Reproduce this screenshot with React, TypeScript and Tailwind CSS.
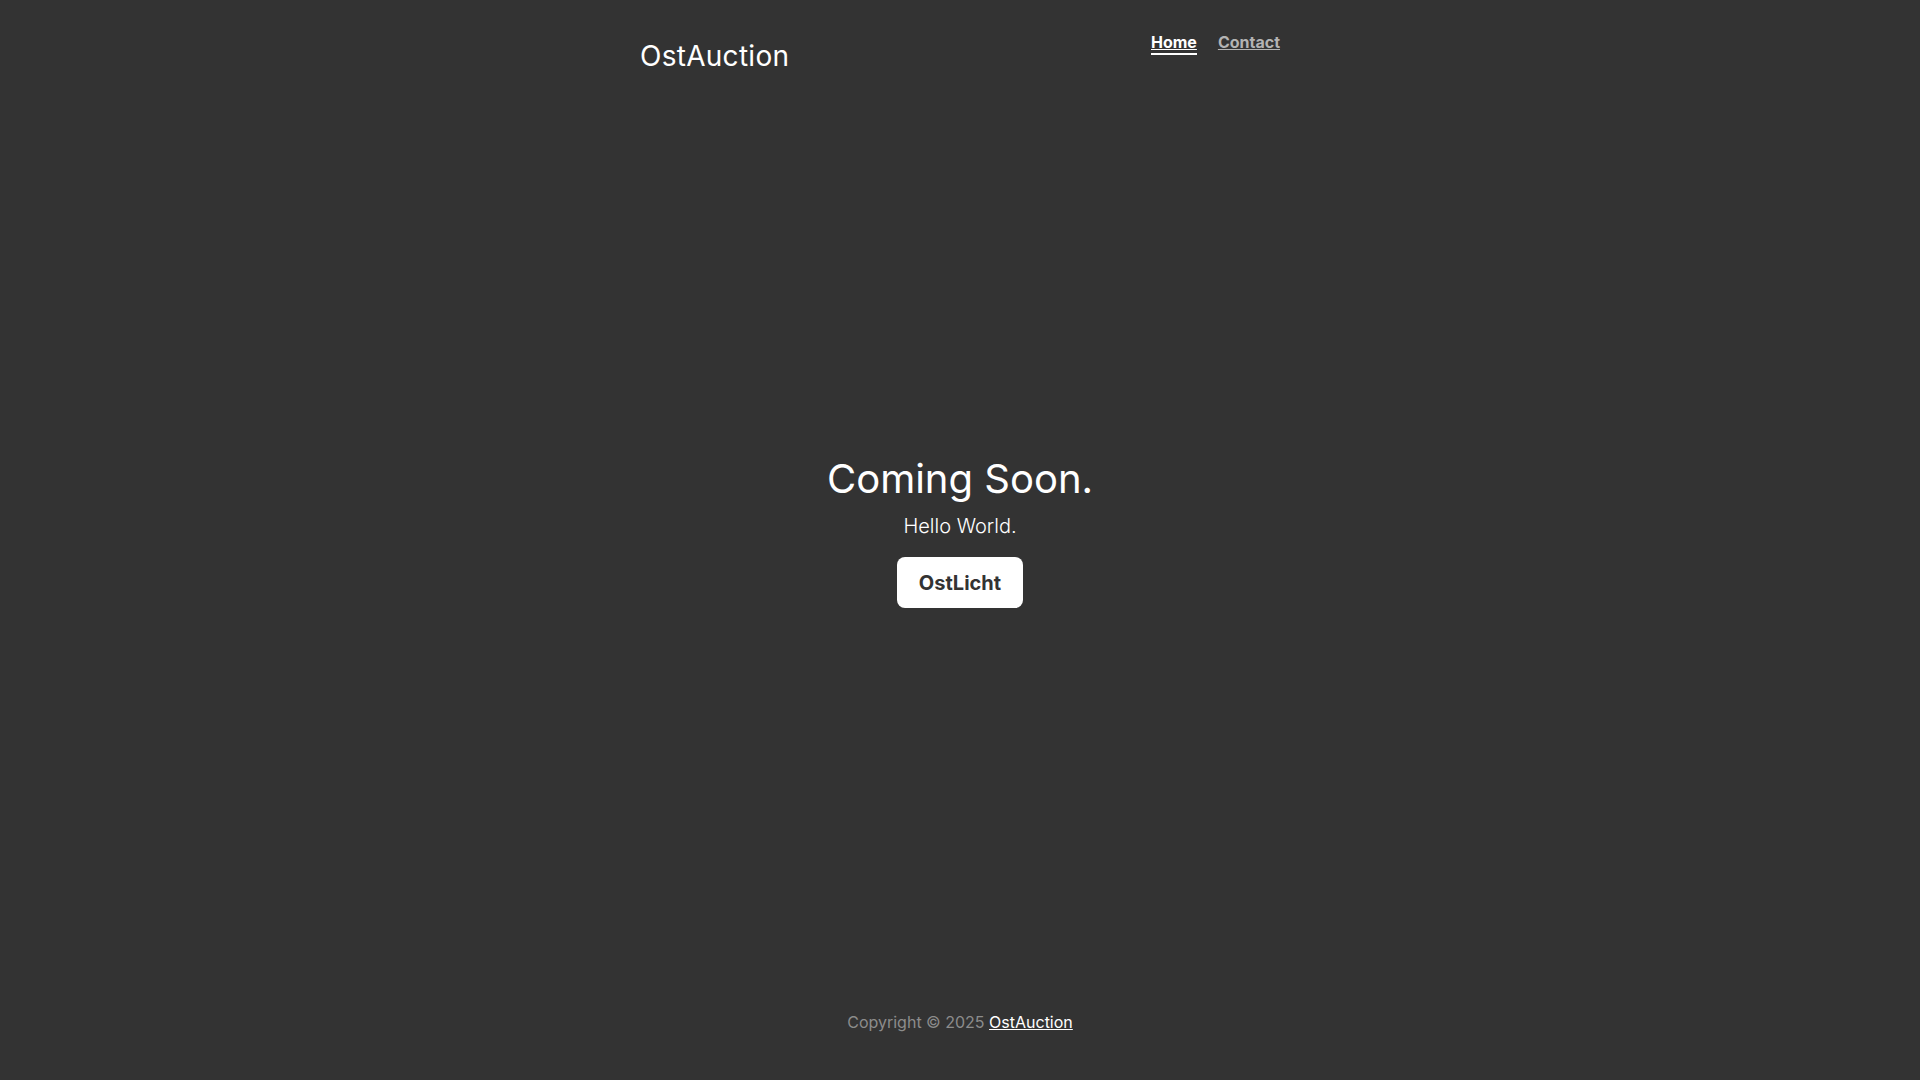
export default function App() {
  return (
    <div
      className="min-h-screen bg-[#333333] text-white flex flex-col"
      style={{ fontFamily: 'Inter, "Noto Sans", sans-serif' }}
    >
      <div className="w-[640px] mx-auto flex-1 flex flex-col">
        {/* Header */}
        <header className="pt-[32px] flex items-start justify-between">
          <h3 className="mt-[7px] text-[28px] leading-[34px] font-normal tracking-[0.01em]">OstAuction</h3>
          <nav className="flex gap-[21px] text-base font-bold">
            <a href="#" className="leading-[21px] border-b-2 border-white text-white underline">
              Home
            </a>
            <a href="#" className="leading-[21px] border-b-2 border-transparent text-[#b3b3b3] underline">
              Contact
            </a>
          </nav>
        </header>

        {/* Main */}
        <main className="flex-1 flex flex-col items-center justify-center pb-[20px] text-center">
          <h1 className="text-[40px] leading-[48px] font-normal mb-2">Coming Soon.</h1>
          <p className="text-xl leading-[30px] font-light mb-4">Hello World.</p>
          <a
            href="#"
            className="h-[51px] px-[22px] flex items-center bg-white text-[#333333] text-xl font-bold rounded-lg"
          >
            OstLicht
          </a>
        </main>

        {/* Footer */}
        <footer className="pb-[46px] text-center text-base leading-6 font-normal text-[#8c8c8c]">
          Copyright © 2025{' '}
          <a href="#" className="text-white underline">
            OstAuction
          </a>
        </footer>
      </div>
    </div>
  );
}
